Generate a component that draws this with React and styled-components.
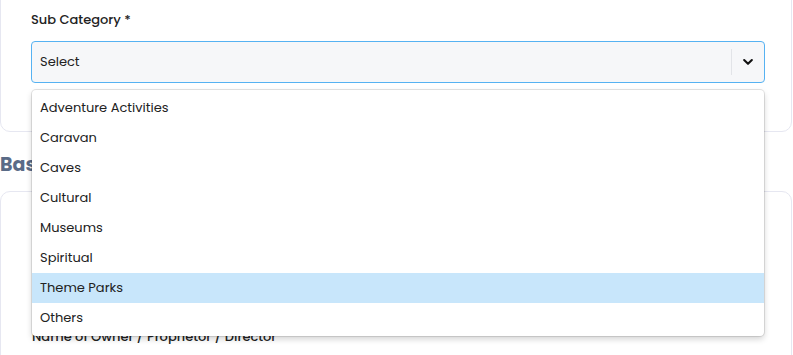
import React, { useState } from "react";
import styled, { createGlobalStyle } from "styled-components";

const GlobalStyle = createGlobalStyle`
  body {
    margin: 0;
    background: #fff;
    font-family: "Poppins", "Noto Sans", "Open Sans", sans-serif;
    overflow: hidden;
  }
`;

const Page = styled.div`
  width: 793px;
  height: 355px;
  overflow: hidden;
  position: relative;
`;

const Card = styled.section`
  box-sizing: border-box;
  width: 792px;
  border: 1px solid #e6e7f1;
  border-radius: 10px;
  padding: ${(props) => props.padding};
  margin-top: ${(props) => props.offset || "0"};
`;

const SectionTitle = styled.h2`
  margin: 21px 0 14px 0;
  font-size: 19px;
  font-weight: 700;
  color: #5a6b87;
  line-height: 24px;
`;

const Field = styled.div`
  position: relative;
  width: 734px;
`;

const Label = styled.label`
  display: block;
  font-size: 13px;
  font-weight: 500;
  color: #222;
  line-height: 20px;
  margin-bottom: 11px;
`;

const SelectBox = styled.div`
  box-sizing: border-box;
  height: 42px;
  display: flex;
  align-items: center;
  background: #f6f7f9;
  border: 1px solid #56b2f2;
  border-radius: 4px;
`;

const SelectValue = styled.div`
  flex: 1;
  padding-left: 8px;
  font-size: 13px;
  color: #222;
`;

const Divider = styled.span`
  width: 1px;
  height: 26px;
  background: #e2e4e8;
`;

const ChevronWrap = styled.div`
  width: 32px;
  display: flex;
  justify-content: center;
  align-items: center;
  color: #111;
`;

const Menu = styled.ul`
  position: absolute;
  top: 80px;
  left: 1px;
  width: 732px;
  box-sizing: border-box;
  list-style: none;
  margin: 0;
  padding: 3px 0;
  background: #fff;
  border-radius: 4px;
  box-shadow: 0 0 0 1px rgba(0, 0, 0, 0.1), 0 3px 6px rgba(0, 0, 0, 0.18);
  z-index: 2;
`;

const Option = styled.li`
  height: 30px;
  display: flex;
  align-items: center;
  padding-left: 8px;
  font-size: 13px;
  color: #222;
  background: ${(props) => (props.active ? "#c8e6fb" : "transparent")};
  cursor: default;
`;

const OwnerLabel = styled.div`
  margin-top: 135px;
  margin-left: 31px;
  font-size: 13px;
  font-weight: 500;
  line-height: 20px;
  color: #222;
`;

const options = [
  "Adventure Activities",
  "Caravan",
  "Caves",
  "Cultural",
  "Museums",
  "Spiritual",
  "Theme Parks",
  "Others",
];

const Chevron = () => (
  <svg width="14" height="14" viewBox="0 0 20 20">
    <path
      d="M4.5 7.2 L10 12.6 L15.5 7.2"
      fill="none"
      stroke="currentColor"
      strokeWidth="3"
      strokeLinecap="round"
      strokeLinejoin="round"
    />
  </svg>
);

export default function App() {
  const [active, setActive] = useState("Theme Parks");
  return (
    <Page>
      <GlobalStyle />
      <Card offset="-40px" padding="49px 0 48px 30px">
        <Field>
          <Label>Sub Category *</Label>
          <SelectBox>
            <SelectValue>Select</SelectValue>
            <Divider />
            <ChevronWrap>
              <Chevron />
            </ChevronWrap>
          </SelectBox>
          <Menu>
            {options.map((o) => (
              <Option key={o} active={o === active} onMouseEnter={() => setActive(o)}>
                {o}
              </Option>
            ))}
          </Menu>
        </Field>
      </Card>
      <SectionTitle>Basic Information</SectionTitle>
      <Card padding="0 0 40px 0">
        <OwnerLabel>Name of Owner / Proprietor / Director</OwnerLabel>
      </Card>
    </Page>
  );
}
